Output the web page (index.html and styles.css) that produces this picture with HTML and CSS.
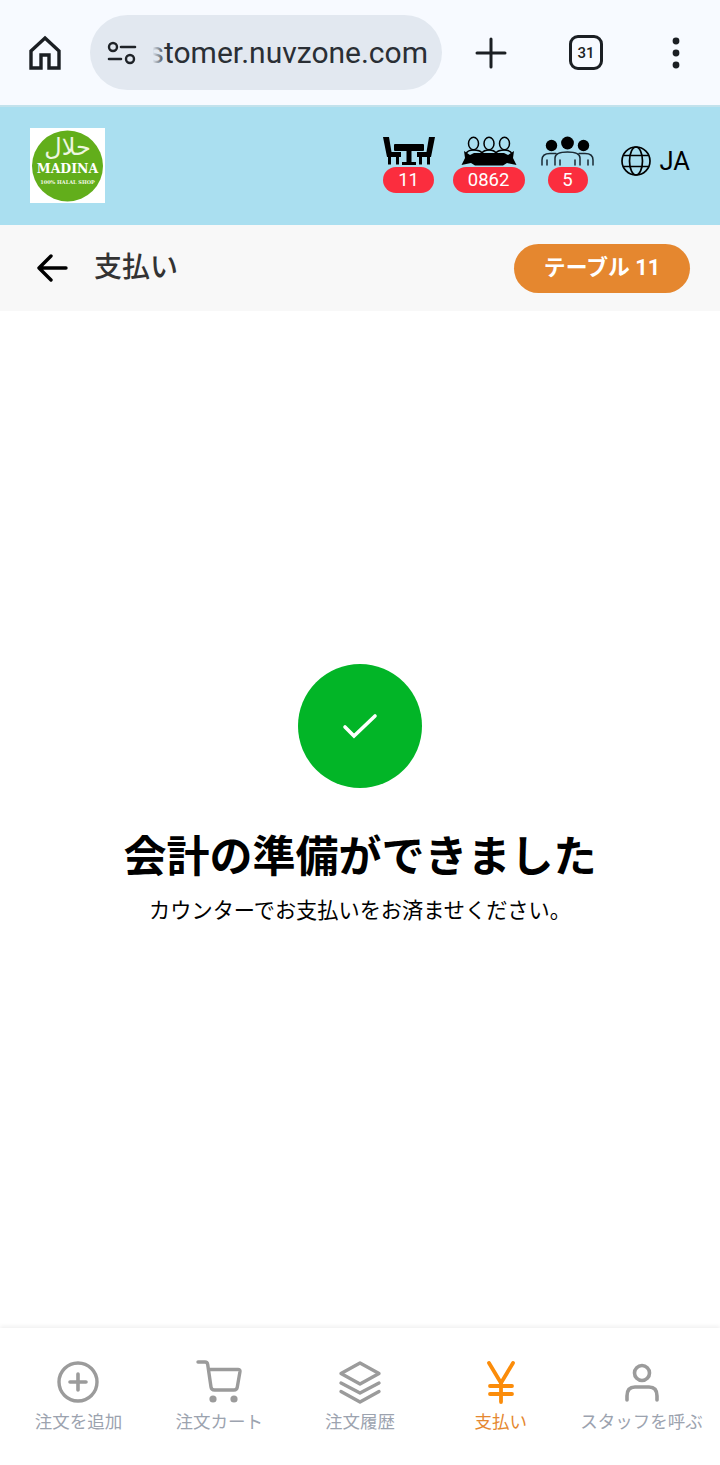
FILE: index.html
```html
<!DOCTYPE html>
<html lang="ja">
<head>
<meta charset="utf-8">
<title>支払い</title>
<link rel="stylesheet" href="styles.css">
</head>
<body>
<div class="page">
  <div class="browser">
    <svg class="b-home" viewBox="0 0 34 36" width="34" height="36"><path d="M17 3 L31 16 V33 H21 V20 H13 V33 H3 V16 Z" fill="none" stroke="#1b1f23" stroke-width="3.4" stroke-linejoin="miter"/></svg>
    <div class="omnibox">
      <svg class="tune" viewBox="0 0 30 24" width="30" height="24"><circle cx="6" cy="6" r="4" fill="none" stroke="#1f2328" stroke-width="2.4"/><path d="M14 6H28M2 18H14" stroke="#1f2328" stroke-width="2.6" stroke-linecap="round"/><circle cx="23" cy="18" r="4" fill="none" stroke="#1f2328" stroke-width="2.4"/></svg>
      <div class="url"><span>stomer.nuvzone.com</span></div>
    </div>
    <svg class="b-plus" viewBox="0 0 32 32" width="32" height="32"><path d="M16 2V30M2 16H30" stroke="#1b1f23" stroke-width="3" stroke-linecap="round"/></svg>
    <div class="tabs">31</div>
    <svg class="b-more" viewBox="0 0 10 32" width="10" height="32"><circle cx="5" cy="4" r="3.4" fill="#1b1f23"/><circle cx="5" cy="16" r="3.4" fill="#1b1f23"/><circle cx="5" cy="28" r="3.4" fill="#1b1f23"/></svg>
  </div>

  <header class="topbar">
    <div class="logo">
      <svg viewBox="0 0 75 75" width="75" height="75">
        <rect width="75" height="75" fill="#fff"/>
        <circle cx="37.5" cy="38" r="35.5" fill="#62ae1b"/>
        <text x="37.5" y="27" class="logo-ar">حلال</text>
        <text x="37.5" y="45" class="logo-name">MADINA</text>
        <text x="37.5" y="56" class="logo-sub">100% HALAL SHOP</text>
      </svg>
    </div>
    <div class="stats">
      <div class="stat stat-table">
        <svg viewBox="0 0 54 30" width="54" height="30">
          <path d="M1 1H7L9.5 16H19V21H17V28.500H14V21H9V28.500H6V21H5Z" fill="#000"/>
          <path d="M53 1H47L44.500 16H35V21H37V28.500H40V21H45V28.500H48V21H49Z" fill="#000"/>
          <rect x="12" y="8" width="30" height="7" rx="1" fill="#000"/>
          <path d="M24.500 15H29.500V26H34V29H20V26H24.500Z" fill="#000"/>
        </svg>
        <span class="badge badge-table">11</span>
      </div>
      <div class="stat stat-order">
        <svg viewBox="0 0 56 30" width="56" height="30">
          <g fill="none" stroke="#000" stroke-width="1.5">
            <ellipse cx="12.500" cy="7.500" rx="5" ry="6.200"/>
            <ellipse cx="28" cy="7.500" rx="5" ry="6.200"/>
            <ellipse cx="43.500" cy="7.500" rx="5" ry="6.200"/>
            <path d="M5 18C6 15 9 14 12.500 14C16 14 19 14 21 17M21 17C23 14 25 14 28 14C31 14 33 14 35 17M35 17C37 14 40 14 43.500 14C47 14 50 15 51 18"/>
          </g>
          <path d="M3 15L9 19L13 17H43L47 19L53 15L52 22L55.500 29L46 27L42 29.500H14L10 27L0.500 29L4 22Z" fill="#000"/>
        </svg>
        <span class="badge badge-order">0862</span>
      </div>
      <div class="stat stat-people">
        <svg viewBox="0 0 54 30" width="54" height="30">
          <circle cx="10.500" cy="9.500" r="5.700" fill="#000"/>
          <circle cx="26.500" cy="7" r="6.400" fill="#000"/>
          <circle cx="42.500" cy="9.500" r="5.700" fill="#000"/>
          <g fill="none" stroke="#1a2a33" stroke-width="1.500" stroke-linecap="round">
            <path d="M1 29V24C1 19 4 17.500 9 17.500H15"/>
            <path d="M52 29V24C52 19 49 17.500 44 17.500H38"/>
            <path d="M14 29V22C14 18 18 16 26.500 16C35 16 39 18 39 22V29"/>
            <path d="M6 24V29M47 24V29M19 24V29M34 24V29"/>
          </g>
        </svg>
        <span class="badge badge-people">5</span>
      </div>
      <div class="lang">
        <svg viewBox="0 0 32 32" width="32" height="32"><g fill="none" stroke="#000" stroke-width="1.700"><circle cx="16" cy="16" r="14"/><ellipse cx="16" cy="16" rx="6.500" ry="14"/><path d="M3.500 10.500H28.500M3.500 21.500H28.500"/></g></svg>
        <span>JA</span>
      </div>
    </div>
  </header>

  <div class="subbar">
    <div class="subbar-left">
      <svg viewBox="0 0 32 30" width="32" height="30"><path d="M30 15H3M15 3L3 15L15 27" fill="none" stroke="#000" stroke-width="3.400" stroke-linecap="round" stroke-linejoin="round"/></svg>
      <h1 class="subbar-title">支払い</h1>
    </div>
    <div class="table-pill">テーブル 11</div>
  </div>

  <main class="content">
    <div class="ok-circle">
      <svg viewBox="0 0 36 26" width="36" height="26"><path d="M3 14L12 23L33 3" fill="none" stroke="#fff" stroke-width="3.600" stroke-linecap="round" stroke-linejoin="miter"/></svg>
    </div>
    <h2 class="ok-title">会計の準備ができました</h2>
    <p class="ok-text">カウンターでお支払いをお済ませください。</p>
  </main>

  <nav class="tabbar">
    <div class="tab">
      <svg viewBox="0 0 44 44" width="44" height="44"><circle cx="22" cy="22" r="19" fill="none" stroke="#9b9b9b" stroke-width="3.400"/><path d="M22 14V30M14 22H30" stroke="#9b9b9b" stroke-width="3.600" stroke-linecap="round"/></svg>
      <span>注文を追加</span>
    </div>
    <div class="tab">
      <svg viewBox="0 0 46 44" width="46" height="44"><path d="M2 2H9C10.500 2 11.500 3 11.700 4.500L15 27C15.300 29 16.500 30 18.500 30H38C40 30 41 29 41.300 27L44 11.500C44.200 10 43.500 9.500 42 9.500H13" fill="none" stroke="#9b9b9b" stroke-width="3.400" stroke-linecap="round" stroke-linejoin="round"/><circle cx="17" cy="39" r="3.600" fill="#9b9b9b"/><circle cx="38" cy="39" r="3.600" fill="#9b9b9b"/></svg>
      <span>注文カート</span>
    </div>
    <div class="tab">
      <svg viewBox="0 0 44 44" width="44" height="44"><g fill="none" stroke="#9b9b9b" stroke-width="3.400" stroke-linecap="round" stroke-linejoin="round"><path d="M22 3L41 13.500L22 24L3 13.500Z"/><path d="M3 23L22 33L41 23"/><path d="M3 31.500L22 42L41 31.500"/></g></svg>
      <span>注文履歴</span>
    </div>
    <div class="tab tab-active">
      <svg viewBox="0 0 44 44" width="44" height="44"><g fill="none" stroke="#fb8c0a" stroke-width="3.800" stroke-linecap="round" stroke-linejoin="round"><path d="M10 3L22 23L34 3"/><path d="M22 23V42"/><path d="M11 26H33M11 34H33"/></g></svg>
      <span>支払い</span>
    </div>
    <div class="tab">
      <svg viewBox="0 0 44 44" width="44" height="44"><g fill="none" stroke="#9b9b9b" stroke-width="3.600" stroke-linecap="round"><circle cx="22" cy="13" r="7.500"/><path d="M7 40V36C7 30 10 27 15 27H29C34 27 37 30 37 36V40"/></g></svg>
      <span>スタッフを呼ぶ</span>
    </div>
  </nav>
</div>
</body>
</html>
```
FILE: styles.css
```css
* { box-sizing: border-box; }
html, body { margin: 0; padding: 0; background: #fff; }
body { font-family: Roboto, "Noto Sans CJK JP", sans-serif; color: #000; }
.page { width: 720px; height: 1465px; display: flex; flex-direction: column; overflow: hidden; }

.browser { flex: 0 0 107px; height: 107px; background: #f7faff; border-bottom: 2px solid #c3e2ec; display: flex; align-items: center; padding: 0 0 0 28px; }
.b-home { flex: none; }
.omnibox { flex: none; width: 352px; height: 75px; margin-left: 28px; border-radius: 38px; background: #e2e8f0; display: flex; align-items: center; padding: 0 14px 0 17px; }
.tune { flex: none; }
.url { position: relative; flex: 1; min-width: 0; display: flex; justify-content: flex-end; font-size: 30px; line-height: 36px; color: #2a2f35; white-space: nowrap; }
.url::before { content: ""; position: absolute; right: 262px; top: 0; bottom: 0; width: 18px; background: linear-gradient(to right, #e2e8f0 25%, rgba(226, 232, 240, 0)); }
.url span { flex: none; }
.b-plus { flex: none; margin-left: 33px; }
.tabs { flex: none; width: 34px; height: 35px; margin-left: 62px; border: 3.800px solid #1b1f23; border-radius: 9px; display: flex; align-items: center; justify-content: center; font-size: 15px; font-weight: 500; color: #1b1f23; }
.b-more { flex: none; margin-left: 68px; }

.topbar { flex: 0 0 118px; background: #aadff0; display: flex; align-items: flex-start; justify-content: space-between; padding: 21px 30px 0; }
.logo { width: 75px; height: 75px; }
.logo svg { display: block; }
.logo-ar { font-family: "DejaVu Sans", sans-serif; font-size: 24px; fill: #eef6e0; text-anchor: middle; }
.logo-name { font-family: "DejaVu Serif", serif; font-weight: 700; font-size: 12.500px; fill: #fff; text-anchor: middle; }
.logo-sub { font-family: "DejaVu Serif", serif; font-weight: 700; font-size: 5px; fill: #f2f8e6; text-anchor: middle; }

.stats { display: flex; align-items: flex-start; }
.stat { display: flex; flex-direction: column; align-items: center; }
.stat svg { display: block; }
.stat-table { width: 54px; margin-top: 8px; }
.stat-order { width: 72px; margin-top: 8px; margin-left: 17px; }
.stat-people { width: 54px; margin-top: 8px; margin-left: 16px; }
.badge { height: 26px; margin-top: 1px; border-radius: 13px; background: #fb2d3e; color: #fff; font-size: 18.500px; line-height: 26px; text-align: center; }
.badge-table { width: 51px; }
.badge-order { width: 72px; }
.badge-people { width: 40px; }
.lang { display: flex; align-items: center; margin-left: 25px; margin-top: 17px; font-size: 25.500px; line-height: 32px; gap: 8px; }
.lang svg { display: block; }

.subbar { flex: 0 0 86px; background: #f8f8f8; display: flex; align-items: center; justify-content: space-between; padding: 0 30px 0 36px; }
.subbar-left { display: flex; align-items: center; gap: 26px; }
.subbar-left svg { display: block; }
.subbar-title { margin: 0; font-size: 28px; font-weight: 500; line-height: 36px; color: #333; }
.table-pill { width: 176px; height: 49px; border-radius: 25px; background: #e5872f; color: #fff; font-size: 21.800px; font-weight: 700; padding-bottom: 5px; display: flex; align-items: center; justify-content: center; }

.content { flex: 1; display: flex; flex-direction: column; align-items: center; padding-top: 353px; }
.ok-circle { width: 124px; height: 124px; border-radius: 50%; background: #02b527; display: flex; align-items: center; justify-content: center; }
.ok-circle svg { display: block; }
.ok-title { margin: 41px 0 0; font-size: 43px; font-weight: 700; line-height: 56px; color: #000; }
.ok-text { margin: 11px 0 0; font-size: 21.200px; line-height: 30px; color: #000; }

.tabbar { flex: 0 0 137px; background: #fff; display: flex; box-shadow: 0 -2px 4px rgba(0, 0, 0, 0.06); padding: 32px 8px 0; }
.tab { flex: 1 1 0; min-width: 0; display: flex; flex-direction: column; align-items: center; color: #9ca3af; font-size: 17.500px; line-height: 24px; white-space: nowrap; }
.tab svg { display: block; }
.tab span { margin-top: 6px; }
.tab-active { color: #e5872f; }
```
